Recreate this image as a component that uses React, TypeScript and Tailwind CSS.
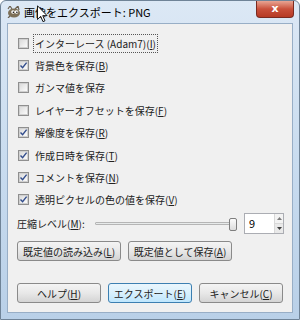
import React from 'react';

const jp = { fontFamily: '"Noto Sans CJK JP", "Noto Sans", sans-serif' };

type Opt = { label: string; key?: string; checked: boolean; focus?: boolean };

const options: Opt[] = [
  { label: 'インターレース (Adam7)', key: 'I', checked: false, focus: true },
  { label: '背景色を保存', key: 'B', checked: true },
  { label: 'ガンマ値を保存', checked: false },
  { label: 'レイヤーオフセットを保存', key: 'F', checked: false },
  { label: '解像度を保存', key: 'R', checked: true },
  { label: '作成日時を保存', key: 'T', checked: true },
  { label: 'コメントを保存', key: 'N', checked: true },
  { label: '透明ピクセルの色の値を保存', key: 'V', checked: true },
];

function Mnemonic({ k }: { k?: string }) {
  if (!k) return null;
  return (
    <span>
      (<u className="underline-offset-1">{k}</u>)
    </span>
  );
}

function CheckBox({ checked }: { checked: boolean }) {
  return (
    <div className="flex h-[11px] w-[11px] shrink-0 items-center justify-center border border-[#8f8f8f] bg-white">
      <div className="relative h-[9px] w-[9px] border border-[#d0d0d0] bg-gradient-to-br from-[#dcdcdc] to-[#fbfbfb]">
        {checked && (
          <svg viewBox="0 0 9 9" className="absolute -left-px -top-px h-[9px] w-[9px]">
            <path d="M1.5 4.6 L3.6 6.8 L7.6 1.6" fill="none" stroke="#314c8c" strokeWidth="1.4" />
          </svg>
        )}
      </div>
    </div>
  );
}

function Button({ children, width, primary }: { children: React.ReactNode; width: string; primary?: boolean }) {
  return (
    <div
      className={`${width} flex h-[20px] items-center justify-center rounded-[3px] border text-[10px] text-[#222] ${
        primary
          ? 'border-[#3c7fb1] bg-gradient-to-b from-[#eaf6fd] via-[#d9f0fc] to-[#bee6fd]'
          : 'border-[#8a8a8a] bg-gradient-to-b from-[#f4f4f4] via-[#e8e8e8] to-[#d4d4d4]'
      }`}
    >
      {children}
    </div>
  );
}

export default function App() {
  return (
    <div style={jp} className="relative h-[320px] w-[300px] overflow-hidden bg-white">
      <div className="flex h-full w-full flex-col rounded-t-[6px] border border-[#6f8397] bg-gradient-to-b from-[#dce8f5] via-[#c9dcef] to-[#b9d0e8]">
        {/* title bar */}
        <div className="flex h-[22px] shrink-0 items-center">
          <svg viewBox="0 0 14 12" className="ml-[6px] h-[12px] w-[14px]">
            <path d="M1 3 L3 0 L5 3 M8 3 L11 0 L12 4" fill="none" stroke="#6b6050" strokeWidth="1.2" />
            <ellipse cx="7" cy="7" rx="6" ry="4.5" fill="#7d7058" />
            <circle cx="6" cy="6" r="1.8" fill="#fff" />
            <circle cx="9.5" cy="6" r="1.8" fill="#fff" />
            <circle cx="6.4" cy="6.2" r="0.8" fill="#000" />
            <circle cx="9.9" cy="6.2" r="0.8" fill="#000" />
            <path d="M3 10 L1 12" stroke="#6b6050" strokeWidth="1.2" />
          </svg>
          <span className="ml-[3px] text-[11px] leading-none text-black">画像をエクスポート: PNG</span>
          <div className="ml-auto mr-[5px] flex h-[17px] w-[38px] items-start justify-center self-start rounded-b-[4px] border border-t-0 border-[#7a2a20] bg-gradient-to-b from-[#e8a493] via-[#c9503b] to-[#b63a24]">
            <span className="mt-[1px] text-[11px] font-bold leading-[14px] text-white" style={{ fontFamily: '"DejaVu Sans", sans-serif' }}>
              x
            </span>
          </div>
        </div>

        {/* client area */}
        <div className="mx-[6px] mb-[6px] flex flex-1 flex-col border border-[#98aec6] bg-[#f0f0f0] pb-[9px] pl-[9px] pr-[8px] pt-[8px]">
          <div className="flex flex-col">
            {options.map((o) => (
              <div key={o.label} className="flex h-[22.4px] items-center gap-[4px] pl-[1px] text-[10px] text-[#222]">
                <CheckBox checked={o.checked} />
                <span
                  className={`whitespace-nowrap px-[1px] leading-[17px] ${
                    o.focus ? 'border border-dotted border-[#555]' : 'border border-transparent'
                  }`}
                >
                  {o.label}
                  <Mnemonic k={o.key} />
                </span>
              </div>
            ))}
          </div>

          {/* compression level */}
          <div className="mt-[2px] flex h-[21px] items-center text-[10px] text-[#222]">
            <span className="w-[78px] whitespace-nowrap">
              圧縮レベル(<u>M</u>):
            </span>
            <div className="relative flex h-[14px] flex-1 items-center">
              <div className="h-[3px] w-full rounded-[1px] border border-[#b5b5b5] bg-[#e7eaea]" />
              <div className="absolute right-[-4px] top-[1px] h-[13px] w-[8px] rounded-[2px] border border-[#7e7e7e] bg-gradient-to-b from-[#fbfbfb] to-[#dcdcdc]" />
            </div>
            <div className="ml-[11px] flex h-[21px] w-[40px] border border-[#abadb3] bg-white">
              <span className="flex-1 pl-[4px] text-[11px] leading-[19px] text-black">9</span>
              <div className="flex w-[9px] flex-col border-l border-[#d8d8d8]">
                <div className="flex flex-1 items-center justify-center border-b border-[#d8d8d8] bg-[#f3f3f3]">
                  <svg viewBox="0 0 5 3" className="h-[3px] w-[5px]"><path d="M0 3 L2.5 0 L5 3Z" fill="#7d7d7d" /></svg>
                </div>
                <div className="flex flex-1 items-center justify-center bg-[#e9e9e9]">
                  <svg viewBox="0 0 5 3" className="h-[3px] w-[5px]"><path d="M0 0 L2.5 3 L5 0Z" fill="#404040" /></svg>
                </div>
              </div>
            </div>
          </div>

          <div className="mt-[7px] flex gap-[7px]">
            <Button width="w-[104px]">
              既定値の読み込み(<u>L</u>)
            </Button>
            <Button width="w-[104px]">
              既定値として保存(<u>A</u>)
            </Button>
          </div>

          <div className="mt-auto flex gap-[7px]">
            <Button width="w-[84px]">
              ヘルプ(<u>H</u>)
            </Button>
            <Button width="w-[84px]" primary>
              エクスポート(<u>E</u>)
            </Button>
            <Button width="w-[84px]">
              キャンセル(<u>C</u>)
            </Button>
          </div>
        </div>
      </div>

      {/* mouse pointer */}
      <svg viewBox="0 0 12 19" className="absolute left-[37px] top-[5px] h-[18px] w-[11px]">
        <path d="M0.5 0.5 L0.5 15.5 L4 12 L6.5 17.8 L8.7 16.9 L6.3 11.3 L11 11.3 Z" fill="#fff" stroke="#000" strokeWidth="1" />
      </svg>
    </div>
  );
}
